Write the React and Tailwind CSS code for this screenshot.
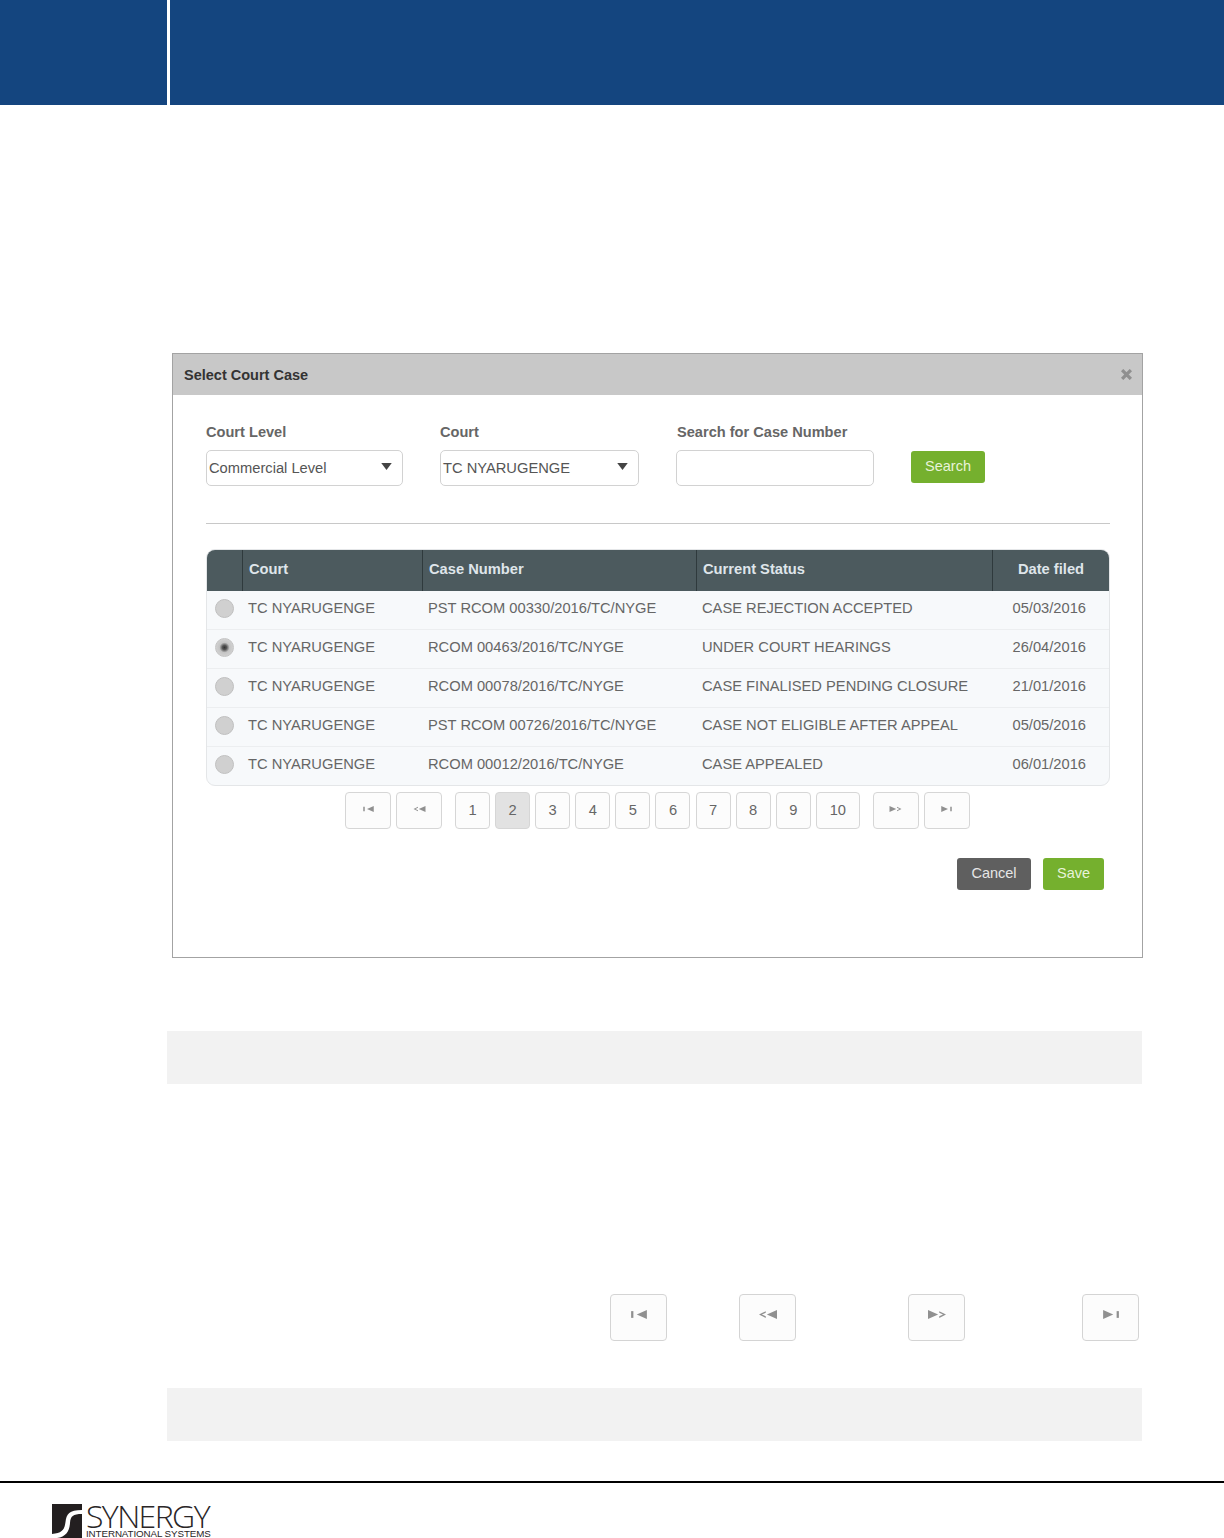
const rows = [
  ["PST RCOM 00330/2016/TC/NYGE", "CASE REJECTION ACCEPTED", "05/03/2016", false],
  ["RCOM 00463/2016/TC/NYGE", "UNDER COURT HEARINGS", "26/04/2016", true],
  ["RCOM 00078/2016/TC/NYGE", "CASE FINALISED PENDING CLOSURE", "21/01/2016", false],
  ["PST RCOM 00726/2016/TC/NYGE", "CASE NOT ELIGIBLE AFTER APPEAL", "05/05/2016", false],
  ["RCOM 00012/2016/TC/NYGE", "CASE APPEALED", "06/01/2016", false],
];

function NavIcon({ kind, className }) {
  const paths = {
    first: <><rect x="1" y="1" width="2" height="6" /><path d="M6 4 L15 0 V8 Z" /></>,
    prev: <><path d="M0 4 L6 1 V2.4 L2.6 4 L6 5.600 V7 Z" /><path d="M7 4 L16 0 V8 Z" /></>,
    next: <><path d="M0 0 L9 4 L0 8 Z" /><path d="M10 1 L16 4 L10 7 V5.600 L13.400 4 L10 2.400 Z" /></>,
    last: <><path d="M1 0 L10 4 L1 8 Z" /><rect x="13" y="1" width="2" height="6" /></>,
  };
  return (
    <svg viewBox="0 0 16 8" className={className} fill="#909090">
      {paths[kind]}
    </svg>
  );
}

function PageBtn({ children, w, active }) {
  return (
    <div
      className={`flex h-[37px] items-center justify-center rounded-[4px] border-[1.5px] border-[#d6d6d6] text-[14.7px] text-[#666] ${w} ${active ? "bg-[#e2e2e2]" : "bg-[#fcfcfc]"}`}
    >
      {children}
    </div>
  );
}

function NavBtn({ kind, className }) {
  return (
    <div className={`flex h-[47px] w-[57px] items-center justify-center rounded-[4px] border-[1.5px] border-[#d4d4d4] bg-[#fcfcfc] pb-[7px] ${className || ""}`}>
      <NavIcon kind={kind} className="h-[9px] w-[18px]" />
    </div>
  );
}

function Select({ value, w }) {
  return (
    <div className={`flex h-[36px] items-center justify-between rounded-[5px] border border-[#d2d2d2] bg-white pl-[2px] pr-[9px] text-[14.7px] text-[#555] ${w}`}>
      <span>{value}</span>
      <svg viewBox="0 0 12 8" className="mb-[3px] h-[7px] w-[13px]" fill="#444"><path d="M0 0 H12 L6 8 Z" /></svg>
    </div>
  );
}

export default function App() {
  return (
    <div className="relative h-[1538px] w-[1224px] overflow-hidden bg-white font-['Liberation_Sans',Arial,sans-serif]">
      <header className="flex h-[105px]">
        <div className="w-[167px] bg-[#14457f]" />
        <div className="w-[3px] bg-white" />
        <div className="flex-1 bg-[#14457f]" />
      </header>

      <main className="pt-[248px]">
        <section className="ml-[172px] flex h-[605px] w-[971px] flex-col border border-[#a3a3a3] bg-white">
          <div className="flex h-[41px] shrink-0 items-center justify-between bg-[#c8c8c8] pl-[11px] pr-[10px] pt-[2px]">
            <h2 className="text-[14.5px] font-bold text-[#333]">Select Court Case</h2>
            <svg viewBox="0 0 10 10" className="mb-[2px] h-[11px] w-[11px]" stroke="#8f8f8f" strokeWidth="3"><path d="M1 1 L9 9 M9 1 L1 9" /></svg>
          </div>

          <div className="px-[33px] pt-[29px]">
            <div className="flex items-start">
              <div className="w-[234px]">
                <div className="mb-[10px] h-[16px] text-[14.6px] font-bold leading-[16px] text-[#666]">Court Level</div>
                <Select value="Commercial Level" w="w-[197px]" />
              </div>
              <div className="w-[236px]">
                <div className="mb-[10px] h-[16px] text-[14.6px] font-bold leading-[16px] text-[#666]">Court</div>
                <Select value="TC NYARUGENGE" w="w-[199px]" />
              </div>
              <div className="w-[235px]">
                <div className="mb-[10px] h-[16px] pl-[1px] text-[14.6px] font-bold leading-[16px] text-[#666]">Search for Case Number</div>
                <div className="h-[36px] w-[198px] rounded-[5px] border border-[#d2d2d2] bg-white" />
              </div>
              <button className="mt-[27px] h-[32px] w-[74px] rounded-[3px] bg-[#75b02e] text-[14.5px] text-[#e8f3da]">Search</button>
            </div>

            <div className="mt-[37px] h-px w-[904px] bg-[#c8c8c8]" />

            <div className="mt-[25px] w-[904px] overflow-hidden rounded-[9px] border border-[#e4e6e8] bg-[#f7f9fb]">
              <div className="grid h-[41px] grid-cols-[35px_180px_274px_296px_1fr] items-center bg-[#4c5a5e] text-[14.7px] font-bold text-[#dfe5ea]">
                <div className="h-full" />
                <div className="flex h-full items-center border-l border-[#2f3a3d] pb-[3px] pl-[6px]">Court</div>
                <div className="flex h-full items-center border-l border-[#2f3a3d] pb-[3px] pl-[6px]">Case Number</div>
                <div className="flex h-full items-center border-l border-[#2f3a3d] pb-[3px] pl-[6px]">Current Status</div>
                <div className="flex h-full items-center justify-center border-l border-[#2f3a3d] pb-[3px]">Date filed</div>
              </div>
              {rows.map((r, i) => (
                <div key={r[0]} className={`grid grid-cols-[35px_180px_274px_296px_1fr] items-center pb-[3px] text-[14.7px] text-[#666] ${i < 4 ? "h-[39px] border-b border-[#eceef0]" : "h-[38px]"}`}>
                  <div className="flex justify-center pr-[1px]">
                    {r[3] ? (
                      <span className="h-[19px] w-[19px] rounded-full border border-[#c4c4c4] bg-[radial-gradient(circle,#333_0%,#555_18%,#c4c4c4_42%,#dedede_100%)]" />
                    ) : (
                      <span className="h-[19px] w-[19px] rounded-full border border-[#c0c0c0] bg-[#d0d0d0]" />
                    )}
                  </div>
                  <div className="pl-[6px]">TC NYARUGENGE</div>
                  <div className="pl-[6px]">{r[0]}</div>
                  <div className="pl-[6px]">{r[1]}</div>
                  <div className="pl-[20.500px]">{r[2]}</div>
                </div>
              ))}
            </div>

            <div className="mt-[6px] flex items-start pl-[139px]">
              <PageBtn w="w-[46px]"><NavIcon kind="first" className="mb-[4px] h-[6px] w-[13px]" /></PageBtn>
              <PageBtn w="ml-[5px] w-[46px]"><NavIcon kind="prev" className="mb-[4px] h-[6px] w-[13px]" /></PageBtn>
              <div className="ml-[13px] flex gap-[5.1px]">
                {[1, 2, 3, 4, 5, 6, 7, 8, 9].map((n) => (
                  <PageBtn key={n} w="w-[35px]" active={n === 2}>{n}</PageBtn>
                ))}
                <PageBtn w="w-[44px]">10</PageBtn>
              </div>
              <PageBtn w="ml-[13px] w-[46px]"><NavIcon kind="next" className="mb-[4px] h-[6px] w-[13px]" /></PageBtn>
              <PageBtn w="ml-[5px] w-[46px]"><NavIcon kind="last" className="mb-[4px] h-[6px] w-[13px]" /></PageBtn>
            </div>

            <div className="mt-[29px] flex justify-end gap-[12px] pr-[5px]">
              <button className="h-[32px] w-[74px] rounded-[3px] bg-[#5f5f5f] text-[14.5px] text-[#e6e6e6]">Cancel</button>
              <button className="h-[32px] w-[61px] rounded-[3px] bg-[#75b02e] text-[14.5px] text-[#e8f3da]">Save</button>
            </div>
          </div>
        </section>

        <div className="ml-[167px] mt-[73px] h-[53px] w-[975px] bg-[#f2f2f2]" />

        <div className="mt-[210px] flex pl-[610px]">
          <NavBtn kind="first" />
          <NavBtn kind="prev" className="ml-[72px]" />
          <NavBtn kind="next" className="ml-[112px]" />
          <NavBtn kind="last" className="ml-[117px]" />
        </div>

        <div className="ml-[167px] mt-[47px] h-[53px] w-[975px] bg-[#f2f2f2]" />
      </main>

      <footer className="mt-[40px]">
        <div className="h-[2px] bg-black" />
        <div className="ml-[52px] mt-[20px] flex items-start">
          <svg viewBox="0 0 30 34" className="mt-[1px] h-[34px] w-[30px] shrink-0">
            <rect width="30" height="34" fill="#231f20" />
            <path d="M30 6 C17 6 14.500 10 13.500 18 C12.500 26 10 29 0 30 V34 H5 C14 33 17.500 27 18 19 C18.500 12 21 10 30 10 Z" fill="#fff" />
          </svg>
          <div className="ml-[4px] text-[#2a2627]">
            <div className="h-[26px] whitespace-nowrap font-['Open_Sans','Liberation_Sans',sans-serif] text-[32px] font-light leading-[26px] tracking-[-1.6px]">SYNERGY</div>
            <div className="whitespace-nowrap text-[9.800px] leading-[9px] tracking-[-0.1px]">INTERNATIONAL SYSTEMS</div>
          </div>
        </div>
      </footer>
    </div>
  );
}
